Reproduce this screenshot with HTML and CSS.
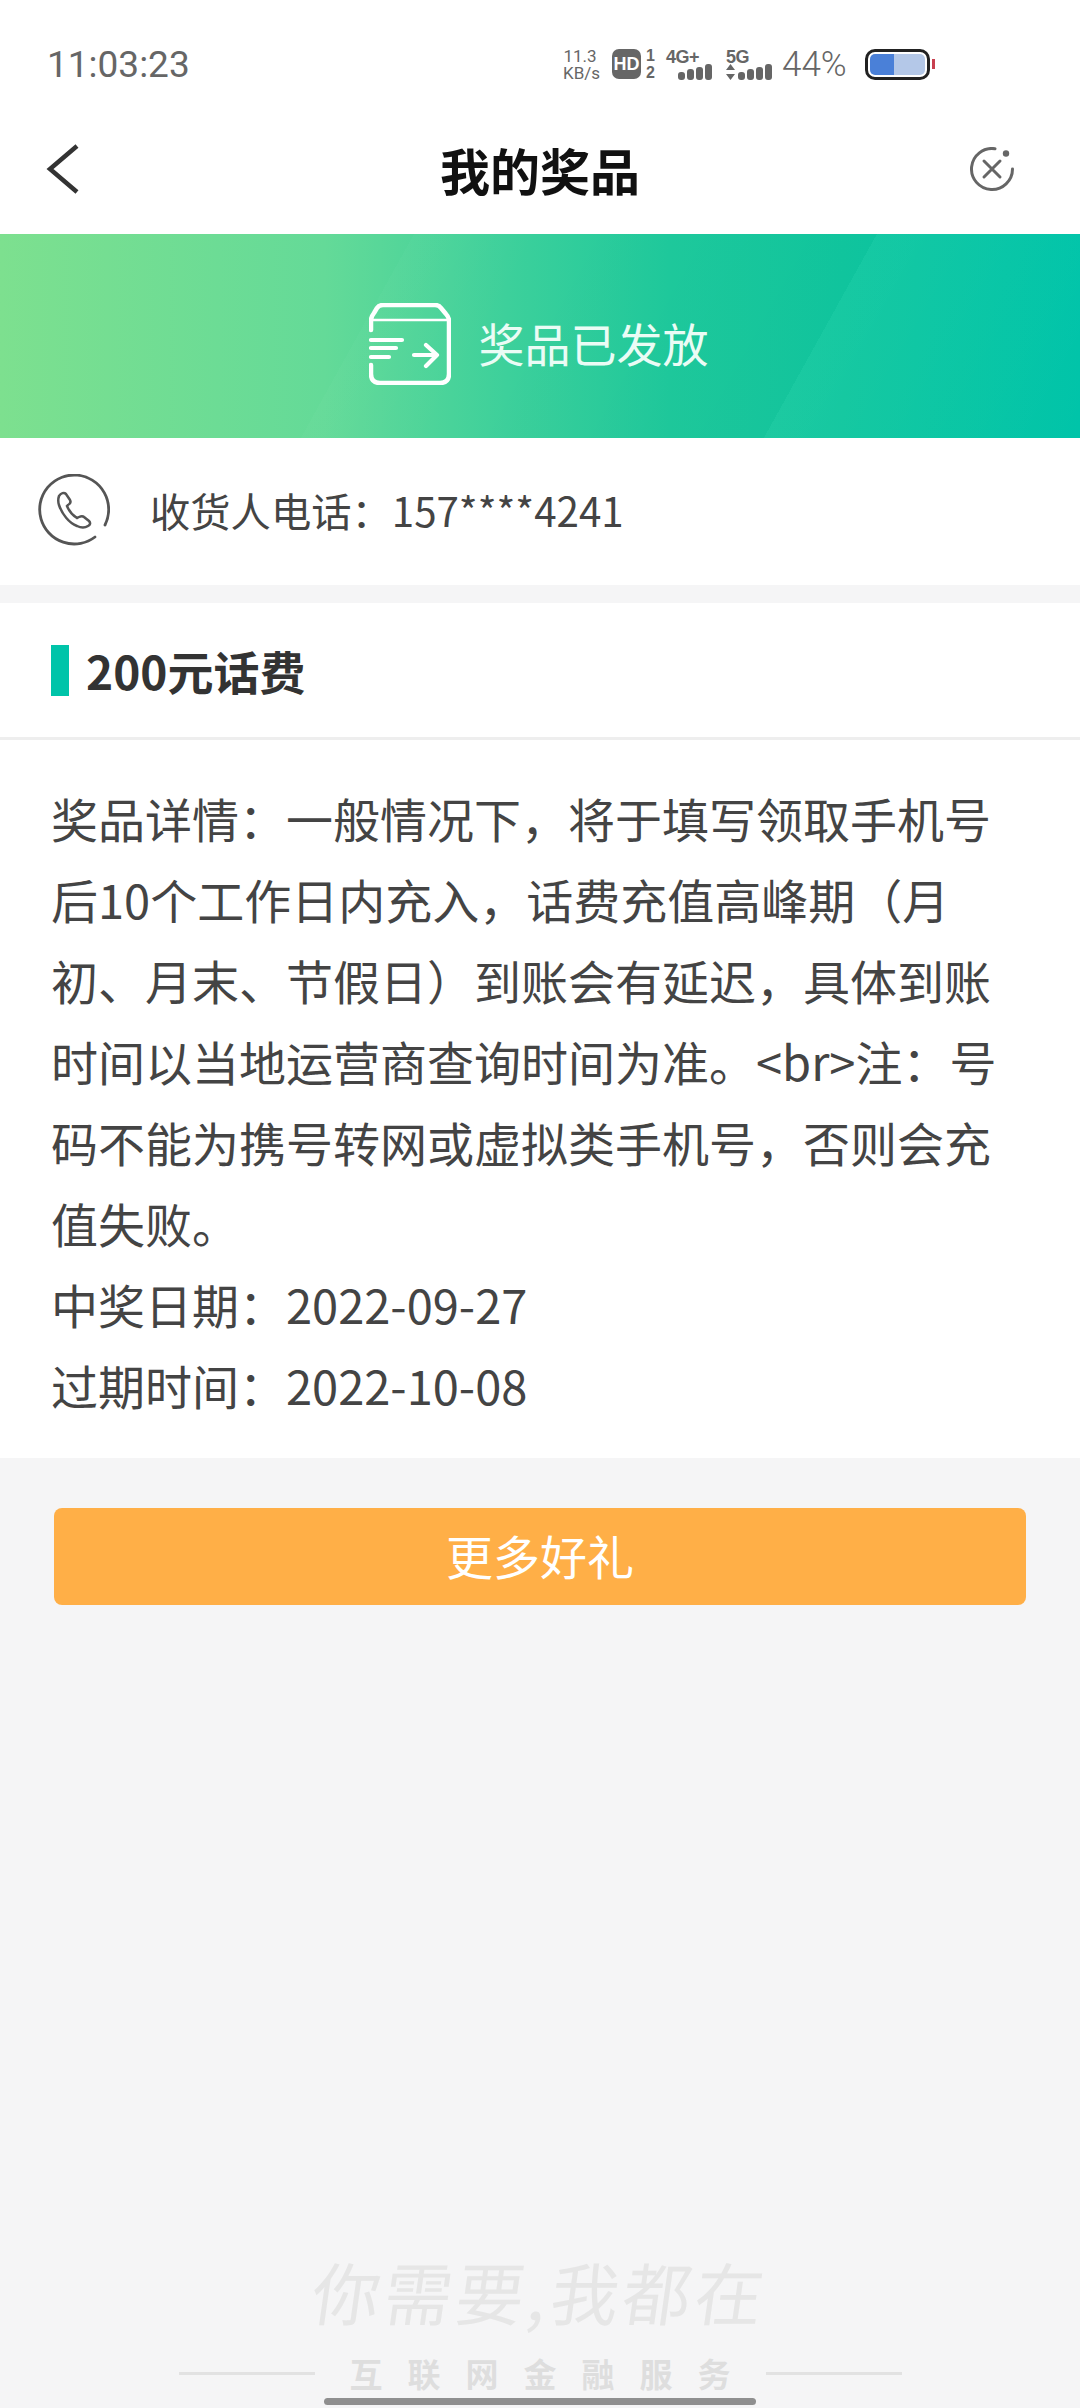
FILE: index.html
```html
<!DOCTYPE html>
<html lang="zh-CN">
<head>
  <meta charset="UTF-8" />
  <meta name="viewport" content="width=device-width, initial-scale=1.0" />
  <title>我的奖品</title>
  <link rel="stylesheet" href="styles.css">
</head>
<body>
  <div class="page">
    <header class="top">
      <!-- Status bar -->
      <div class="status">
        <span class="clock">11:03:23</span>
        <div class="status-icons">
          <span class="speed">11.3<br>KB/s</span>
          <span class="hd">HD</span>
          <span class="sim"><b>1</b><b>2</b></span>
          <span class="net">
            <span class="net-name">4G+</span>
            <svg width="47" height="16" viewBox="0 0 47 16"><g fill="#666"><rect x="12" y="8" width="7" height="8" rx="3"/><rect x="21" y="5" width="7" height="11" rx="3"/><rect x="30" y="3" width="7" height="13" rx="3"/><rect x="39" y="0" width="7" height="16" rx="3"/></g></svg>
          </span>
          <span class="net net-5g">
            <span class="net-name">5G</span>
            <svg width="47" height="16" viewBox="0 0 47 16"><g fill="#666"><path d="M0 6h9L4.500 0zM0 10h9l-4.500 6z"/><rect x="12" y="8" width="7" height="8" rx="3"/><rect x="21" y="5" width="7" height="11" rx="3"/><rect x="30" y="3" width="7" height="13" rx="3"/><rect x="39" y="0" width="7" height="16" rx="3"/></g></svg>
          </span>
          <span class="percent">44%</span>
          <span class="battery"><span class="battery-level"></span></span>
          <span class="battery-tip"></span>
        </div>
      </div>
      <!-- Title bar -->
      <nav class="titlebar">
        <svg class="back" width="34" height="50" viewBox="0 0 34 50"><path d="M31 2 4 25l27 23" fill="none" stroke="#333" stroke-width="4.500"/></svg>
        <h1>我的奖品</h1>
        <svg class="close" width="44" height="44" viewBox="0 0 44 44"><g fill="none" stroke="#666" stroke-width="3" stroke-linecap="round"><path d="M25 1.700A20.500 20.500 0 1 0 42.500 22"/><path d="M14 14 30 30M30 14 14 30"/></g><circle cx="36" cy="6.500" r="3.200" fill="#666"/></svg>
      </nav>
    </header>

    <section class="banner">
      <svg width="82" height="82" viewBox="0 0 82 82"><g fill="none" stroke="#fff" stroke-linecap="round" stroke-linejoin="round"><path d="M2 27V17Q2 14 5 10L8 5Q10 2 14 2H66Q70 2 72 5L77 11Q80 14 80 18V71C80 77 77 80 71 80H11C5 80 2 77 2 71V62" stroke-width="4.500"/><path d="M3 17H79" stroke-width="2.500"/><path d="M2 37H33M2 45H27M2 54H20M45 52H68M57 42 68 52 57 63" stroke-width="4.200"/></g></svg>
      <span>奖品已发放</span>
    </section>

    <section class="phone">
      <svg width="72" height="72" viewBox="0 0 72 72"><path d="M57 63A34.500 34.500 0 1 1 67 51" fill="none" stroke="#555" stroke-width="2.800" stroke-linecap="round"/><path d="M21 22c2-3 5-4 7-2l4 6c1 2 0 4-2 5l-1 1c2 5 5 9 10 12l2-1c2-1 4-1 5 0l5 4c2 2 1 4-1 5-3 2-7 2-11 0C31 49 24 40 21 31c-1-3-1-6 0-9z" fill="none" stroke="#555" stroke-width="2.500"/></svg>
      <span>收货人电话：157****4241</span>
    </section>

    <section class="prize">
      <h2 class="prize-title">200元话费</h2>
      <div class="prize-body">
        <p>奖品详情：一般情况下，将于填写领取手机号后10个工作日内充入，话费充值高峰期（月初、月末、节假日）到账会有延迟，具体到账时间以当地运营商查询时间为准。&lt;br&gt;注：号码不能为携号转网或虚拟类手机号，否则会充值失败。</p>
        <p>中奖日期：2022-09-27</p>
        <p>过期时间：2022-10-08</p>
      </div>
    </section>

    <div class="actions">
      <button type="button" class="more">更多好礼</button>
    </div>

    <!-- Footer slogan -->
    <footer class="slogan">
      <div class="sign">你需要,我都在</div>
      <div class="slogan-line">
        <i></i>
        <span>互联网金融服务</span>
        <i></i>
      </div>
    </footer>

    <div class="home-bar"></div>
  </div>
</body>
</html>
```

FILE: styles.css
```css
/* Base */
* {
  box-sizing: border-box;
}
body {
  margin: 0;
  font-family: "Noto Sans CJK SC", "Noto Sans", sans-serif;
  color: #333;
  background-color: #f5f5f6;
}
.page {
  width: 1080px;
  height: 2408px;
  overflow: hidden;
  position: relative;
  display: flex;
  flex-direction: column;
}

/* Status bar */
.top {
  background-color: #fff;
  height: 234px;
}
.status {
  height: 104px;
  padding: 24px 0 0 47px;
  display: flex;
  align-items: center;
  justify-content: space-between;
}
.clock {
  font-family: Roboto, sans-serif;
  font-size: 37px;
  color: #666;
}
.status-icons {
  display: flex;
  align-items: center;
  margin-right: 145px;
  color: #666;
  height: 31px;
}
.speed {
  font-family: Roboto, sans-serif;
  font-size: 17px;
  line-height: 16.500px;
  text-align: center;
  width: 34px;
  margin-top: 1px;
}
.hd {
  margin-left: 15px;
  width: 29px;
  height: 30px;
  border-radius: 7px;
  background-color: #666;
  color: #fff;
  font-family: "Liberation Sans", sans-serif;
  font-size: 18px;
  font-weight: 700;
  line-height: 30px;
  text-align: center;
}
.sim {
  display: flex;
  flex-direction: column;
  font-family: "Liberation Sans", sans-serif;
  font-size: 16px;
  line-height: 17px;
  margin-left: 4px;
  width: 11px;
  text-align: center;
}
.net {
  position: relative;
  width: 47px;
  height: 31px;
  margin-left: 10px;
  display: block;
}
.net svg {
  position: absolute;
  right: 0;
  bottom: 0;
}
.net-name {
  position: absolute;
  left: 0;
  top: 0;
  font-family: "Liberation Sans", sans-serif;
  font-size: 18px;
  font-weight: 700;
  letter-spacing: -0.500px;
  line-height: 16px;
}
.net-5g {
  margin-left: 13px;
}
.percent {
  font-family: Roboto, sans-serif;
  font-weight: 300;
  font-size: 35px;
  margin-left: 9px;
  width: 65px;
}
.battery {
  margin-left: 18px;
  width: 65px;
  height: 31px;
  border: 3px solid #222;
  border-radius: 10px;
  padding: 2px;
  display: block;
}
.battery-level {
  display: block;
  height: 100%;
  border-radius: 5px;
  background: linear-gradient(to right, #4a80d8 0, #4a80d8 44%, #b4c8e8 44%);
}
.battery-tip {
  margin-left: 2px;
  width: 3px;
  height: 10px;
  background-color: #c8404f;
}

/* Title bar */
.titlebar {
  height: 130px;
  padding: 0 66px 0 46px;
  position: relative;
  display: flex;
  align-items: center;
  justify-content: space-between;
}
.titlebar h1 {
  position: absolute;
  left: 0;
  right: 0;
  margin: 0;
  text-align: center;
  font-size: 50px;
  font-weight: 700;
  color: #111;
}

/* Banner */
.banner {
  height: 204px;
  display: flex;
  align-items: center;
  justify-content: center;
  gap: 28px;
  padding: 12px 3px 0 0;
  color: #eafcf5;
  font-size: 46px;
  background:
    linear-gradient(119deg, rgba(255,255,255,0) 34.700%, rgba(255,255,255,.02) 34.700%, rgba(255,255,255,0) 46.100%, rgba(0,0,0,0) 46.100%, rgba(0,0,0,.015) 73.500%, rgba(255,255,255,.03) 73.500%, rgba(255,255,255,0) 100%),
    linear-gradient(to right, #7de08f 0, #64da98 30%, #3dd09b 47%, #1ec99c 62%, #10c79f 78%, #00c4a9 100%);
}
.banner svg {
  margin-top: 3px;
}

/* Phone row */
.phone {
  height: 147px;
  background-color: #fff;
  display: flex;
  align-items: center;
  padding: 0 0 4px 38px;
  gap: 40px;
  font-size: 40.300px;
  color: #444;
}

/* Prize */
.prize {
  margin-top: 18px;
  background-color: #fff;
}
.prize-title {
  margin: 0;
  height: 137px;
  border-bottom: 3px solid #eee;
  display: flex;
  align-items: center;
  padding-left: 51px;
  font-size: 46px;
  font-weight: 700;
  color: #333;
}
.prize-title::before {
  content: "";
  width: 18px;
  height: 51px;
  margin-right: 17px;
  background-color: #00c4a9;
}
.prize-body {
  padding: 37px 50px 33px 51px;
  font-size: 47px;
  line-height: 81px;
  color: #444;
}
.prize-body p {
  margin: 0;
}

/* Button */
.actions {
  padding: 50px 54px 0;
}
.more {
  display: block;
  width: 100%;
  height: 97px;
  padding: 0 0 4px;
  border: none;
  border-radius: 8px;
  background-color: #ffaf47;
  color: #fff;
  font-family: inherit;
  font-size: 47px;
}

/* Footer */
.slogan {
  margin-top: auto;
  padding-bottom: 13px;
  display: flex;
  flex-direction: column;
  align-items: center;
}
.sign {
  height: 112px;
  margin-bottom: 4px;
  font-size: 68px;
  line-height: 112px;
  letter-spacing: 4px;
  white-space: nowrap;
  color: #e6e6e6;
  transform: skewX(-8deg);
}
.slogan-line {
  display: flex;
  align-items: center;
  gap: 35px;
  color: #dedede;
}
.slogan-line i {
  width: 136px;
  height: 3px;
  background-color: #e2e2e2;
}
.slogan-line span {
  font-size: 33px;
  font-weight: 700;
  letter-spacing: 25px;
  margin-right: -25px;
  line-height: 44px;
}

/* Gesture bar */
.home-bar {
  position: absolute;
  left: 324px;
  bottom: 3px;
  width: 432px;
  height: 7px;
  border-radius: 4px;
  background-color: #8f8f8f;
}
```
